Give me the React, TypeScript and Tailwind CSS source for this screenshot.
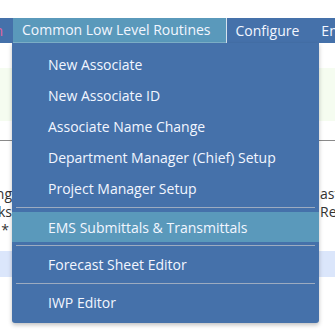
import React from 'react'

const FONT = { fontFamily: '"Open Sans", "Noto Sans", sans-serif' }

type MenuEntry = { label: string; active?: boolean } | 'sep'

const MENU: MenuEntry[] = [
  { label: 'New Associate' },
  { label: 'New Associate ID' },
  { label: 'Associate Name Change' },
  { label: 'Department Manager (Chief) Setup' },
  { label: 'Project Manager Setup' },
  'sep',
  { label: 'EMS Submittals & Transmittals', active: true },
  'sep',
  { label: 'Forecast Sheet Editor' },
  'sep',
  { label: 'IWP Editor' },
]

function Dropdown() {
  return (
    <div className="absolute left-[12px] top-[43px] w-[307px] rounded-b-[3px] bg-[#4571aa] pb-[5px] pt-[6px] shadow-[0_2px_4px_rgba(0,0,0,0.25)]">
      {MENU.map((m, i) =>
        m === 'sep' ? (
          <div
            key={i}
            className={`mx-[4px] mt-[3px] h-px bg-[#9cabc0] ${i === 5 ? 'mb-[4px]' : 'mb-[3px]'}`}
          />
        ) : (
          <div
            key={i}
            className={`flex items-center whitespace-nowrap pl-[36px] text-[14px] text-[#f2f6ff] ${
              m.active ? 'h-[30px] bg-[#5a99bb]' : 'h-[31px]'
            }`}
          >
            {m.label}
          </div>
        )
      )}
    </div>
  )
}

export default function App() {
  return (
    <div className="relative h-[333px] w-[335px] overflow-hidden bg-white text-[#333]" style={FONT}>
      <div className="h-[18px]" />

      {/* Nav bar */}
      <div className="flex h-[25px] items-stretch overflow-hidden whitespace-nowrap bg-[#4571aa] text-[14px] text-[#f2f6ff]">
        <div className="flex w-[13px] shrink-0 justify-end overflow-hidden pr-[10px]">
          <span className="leading-[25px] text-[#e4639d]">Admin</span>
        </div>
        <div className="shrink-0 border-b border-[#7fb3cc] bg-[#5a99bb] pl-[9px] pr-[15px] leading-[24px]">
          Common Low Level Routines
        </div>
        <div className="w-px shrink-0 bg-[#d6e2ee]" />
        <div className="shrink-0 pl-[9px] pr-[22px] leading-[25px]">Configure</div>
        <div className="shrink-0 leading-[25px]">Engineering</div>
      </div>

      {/* Page body behind menu */}
      <div className="h-[25px]" />
      <div className="h-[53px] bg-[#f5fcf0]" />
      <div className="h-[19px]" />
      <div className="h-px bg-[#8a8a8a]" />
      <div className="h-[44px]" />
      <div className="flex text-[14px] leading-[18px]">
        <div className="flex w-[12px] shrink-0 flex-col items-end overflow-hidden whitespace-nowrap">
          <span>Routing</span>
          <span>Tasks</span>
          <span className="pr-[3px]">*</span>
        </div>
        <div className="flex-1" />
        <div className="flex w-[15px] shrink-0 flex-col whitespace-nowrap">
          <span>ast</span>
          <span>Reports</span>
        </div>
      </div>
      <div className="h-[12px]" />
      <div className="h-[26px] bg-[#dbe6fb]" />

      <Dropdown />
    </div>
  )
}
